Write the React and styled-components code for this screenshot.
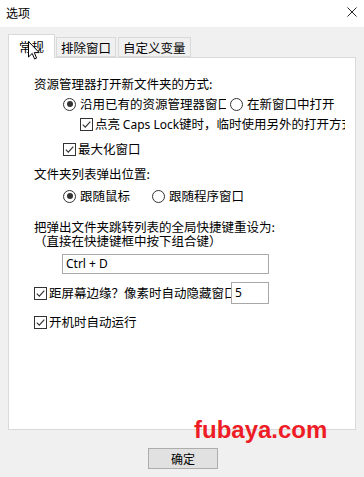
import React from "react";
import styled, { createGlobalStyle } from "styled-components";

const GlobalStyle = createGlobalStyle`
  html, body {
    margin: 0;
    padding: 0;
    background: #f0f0f0;
  }
  body {
    font-family: "Noto Sans CJK SC", "Noto Sans", sans-serif;
    font-size: 12.5px;
    color: #000;
  }
`;

const Window = styled.div`
  position: relative;
  width: 364px;
  height: 477px;
  background: #f0f0f0;
  display: flex;
  flex-direction: column;
  overflow: hidden;
`;

const TitleBar = styled.div`
  height: 27px;
  background: #fff;
  display: flex;
  align-items: center;
  justify-content: space-between;
  padding: 0 6px 3px 6px;
  box-sizing: border-box;
  font-size: 12px;
`;

const CloseIcon = styled.svg`
  width: 10px;
  height: 10px;
  margin-right: 1px;
`;

const Body = styled.div`
  padding: 6px 8px 0 8px;
  display: flex;
  flex-direction: column;
`;

const TabBar = styled.div`
  display: flex;
  align-items: flex-end;
  height: 24px;
  position: relative;
  z-index: 1;
`;

const Tab = styled.div`
  height: ${p => (p.$active ? "24px" : "20px")};
  padding: 0 ${p => (p.$active ? "10px" : "4px")};
  margin-left: ${p => p.$ml || 0}px;
  margin-bottom: ${p => (p.$active ? "-1px" : "0")};
  box-sizing: border-box;
  display: flex;
  align-items: center;
  background: ${p => (p.$active ? "#fff" : "#f0f0f0")};
  border: 1px solid #d9d9d9;
  border-bottom: ${p => (p.$active ? "none" : "1px solid #d9d9d9")};
  font-size: 12.5px;
  white-space: nowrap;
`;

const Panel = styled.div`
  height: 373px;
  box-sizing: border-box;
  background: #fff;
  border: 1px solid #d9d9d9;
  padding: 16px 0 0 25px;
  display: flex;
  flex-direction: column;
`;

const Row = styled.div`
  display: flex;
  align-items: center;
  height: ${p => p.$h || 20}px;
  line-height: ${p => p.$h || 20}px;
  margin-top: ${p => p.$top || 0}px;
  padding-left: ${p => p.$indent || 0}px;
  white-space: nowrap;
`;

const Control = styled.div`
  display: flex;
  align-items: center;
  gap: ${p => p.$gap || 4}px;
  width: ${p => (p.$w ? `${p.$w}px` : "auto")};
  margin-right: ${p => p.$mr || 0}px;
  overflow: hidden;
  white-space: nowrap;
  flex-shrink: 0;
`;

const RadioCircle = styled.span`
  width: 11px;
  height: 11px;
  border: 1px solid #333;
  border-radius: 50%;
  flex-shrink: 0;
  display: flex;
  align-items: center;
  justify-content: center;
  background: #fff;
  &::after {
    content: "";
    width: 6px;
    height: 6px;
    border-radius: 50%;
    background: ${p => (p.$on ? "#333" : "transparent")};
  }
`;

const CheckSvg = styled.svg`
  width: 13px;
  height: 13px;
  flex-shrink: 0;
`;

const TextBox = styled.div`
  width: ${p => p.$w}px;
  height: ${p => p.$h}px;
  box-sizing: border-box;
  border: 1px solid #a8a8a8;
  background: #fff;
  display: flex;
  align-items: center;
  padding-left: 3px;
  font-family: "Noto Sans", "Noto Sans CJK SC", sans-serif;
  font-size: 12px;
  flex-shrink: 0;
`;

const Latin = styled.span`
  font-family: "Noto Sans", sans-serif;
  font-size: 12px;
`;

const Footer = styled.div`
  flex: 1;
  display: flex;
  justify-content: center;
  padding-top: 18px;
`;

const Button = styled.button`
  width: 70px;
  height: 21px;
  background: #e1e1e1;
  border: 1px solid #adadad;
  font-family: "Noto Sans CJK SC", sans-serif;
  font-size: 12px;
  color: #000;
  padding: 0;
  margin-left: 2px;
`;

const Watermark = styled.div`
  position: absolute;
  left: 194px;
  top: 416px;
  font-family: "Liberation Sans", Arial, sans-serif;
  font-weight: bold;
  font-size: 24px;
  color: #ee1c25;
`;

const Cursor = styled.svg`
  position: absolute;
  left: 28px;
  top: 41px;
  width: 12px;
  height: 19px;
  z-index: 2;
`;

function Radio({ on, label, w, mr }) {
  return (
    <Control $w={w} $mr={mr}>
      <RadioCircle $on={on} />
      <span>{label}</span>
    </Control>
  );
}

function Check({ label, w, gap }) {
  return (
    <Control $w={w} $gap={gap || 2}>
      <CheckSvg viewBox="0 0 13 13">
        <rect x="0.5" y="0.5" width="12" height="12" fill="#fff" stroke="#333" />
        <path d="M2.8 6.6 L5.3 9.1 L10.3 3.6" fill="none" stroke="#333" strokeWidth="1.2" />
      </CheckSvg>
      <span>{label}</span>
    </Control>
  );
}

export default function App() {
  return (
    <>
      <GlobalStyle />
      <Window>
        <TitleBar>
          <span>选项</span>
          <CloseIcon viewBox="0 0 10 10">
            <path d="M0.5 0.5 L9.5 9.5 M9.5 0.5 L0.5 9.5" stroke="#222" strokeWidth="1" />
          </CloseIcon>
        </TitleBar>
        <Body>
          <TabBar>
            <Tab $active>常规</Tab>
            <Tab $ml={1}>排除窗口</Tab>
            <Tab $ml={2}>自定义变量</Tab>
          </TabBar>
          <Panel>
            <Row>资源管理器打开新文件夹的方式:</Row>
            <Row $indent={29}>
              <Radio on label="沿用已有的资源管理器窗口" w={163} mr={4} />
              <Radio label="在新窗口中打开" />
            </Row>
            <Row $indent={46}>
              <Check
                label={
                  <>
                    点亮 <Latin>Caps Lock</Latin>键时，临时使用另外的打开方式
                  </>
                }
                w={265}
              />
            </Row>
            <Row $indent={29} $top={5}>
              <Check label="最大化窗口" />
            </Row>
            <Row $top={5}>文件夹列表弹出位置:</Row>
            <Row $indent={29} $top={2}>
              <Radio on label="跟随鼠标" w={85} mr={4} />
              <Radio label="跟随程序窗口" />
            </Row>
            <Row $top={14} $h={14}>把弹出文件夹跳转列表的全局快捷键重设为:</Row>
            <Row $h={14}>（直接在快捷键框中按下组合键）</Row>
            <Row $indent={28} $top={6} $h={20}>
              <TextBox $w={207} $h={20}>Ctrl + D</TextBox>
            </Row>
            <Row $top={8} $h={22}>
              <Check label="距屏幕边缘？像素时自动隐藏窗口" w={197} />
              <TextBox $w={38} $h={22}>5</TextBox>
            </Row>
            <Row $top={8}>
              <Check label="开机时自动运行" />
            </Row>
          </Panel>
        </Body>
        <Footer>
          <Button>确定</Button>
        </Footer>
        <Watermark>fubaya.com</Watermark>
        <Cursor viewBox="0 0 12 19">
          <path
            d="M0.5 0.5 L0.5 16 L4.2 12.4 L6.6 18 L8.6 17.1 L6.3 11.6 L11.2 11.6 Z"
            fill="#fff"
            stroke="#000"
            strokeWidth="1"
          />
        </Cursor>
      </Window>
    </>
  );
}
